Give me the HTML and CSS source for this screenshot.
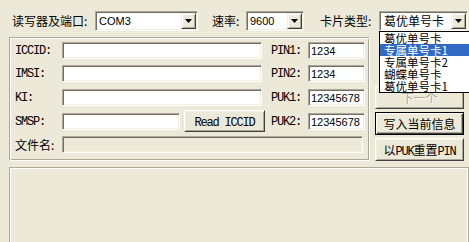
FILE: index.html
```html
<!DOCTYPE html>
<html>
<head>
    <meta charset="utf-8">
    <link rel="stylesheet" href="styles.css">
</head>
<body>
    <div class="top">
        <span class="top-lbl w-port">读写器及端口:</span>
        <div class="combo w-com">
            <span class="combo-text">COM3</span>
            <span class="arrow"></span>
        </div>
        <span class="top-lbl w-rate">速率:</span>
        <div class="combo w-baud">
            <span class="combo-text">9600</span>
            <span class="arrow"></span>
        </div>
        <span class="top-lbl w-type">卡片类型:</span>
        <div class="combo-wrap">
            <div class="combo w-card">
                <span class="combo-text cjk">葛优单号卡</span>
                <span class="arrow"></span>
            </div>
            <ul class="list">
                <li>葛优单号卡</li>
                <li class="sel">专属单号卡1</li>
                <li>专属单号卡2</li>
                <li>蝴蝶单号卡</li>
                <li>葛优单号卡1</li>
            </ul>
        </div>
    </div>

    <div class="main">
        <div class="group">
            <div class="row">
                <span class="lbl m">ICCID:</span>
                <input class="field w-iccid" type="text" value="">
                <span class="lbl2 m">PIN1:</span>
                <input class="field w-pin" type="text" value="1234">
            </div>
            <div class="row">
                <span class="lbl m">IMSI:</span>
                <input class="field w-iccid" type="text" value="">
                <span class="lbl2 m">PIN2:</span>
                <input class="field w-pin" type="text" value="1234">
            </div>
            <div class="row">
                <span class="lbl m">KI:</span>
                <input class="field w-iccid" type="text" value="">
                <span class="lbl2 m">PUK1:</span>
                <input class="field w-pin" type="text" value="12345678">
            </div>
            <div class="row">
                <span class="lbl m">SMSP:</span>
                <input class="field w-smsp" type="text" value="">
                <button class="btn btn-read"><span class="m">Read ICCID</span></button>
                <span class="lbl2 m">PUK2:</span>
                <input class="field w-pin" type="text" value="12345678">
            </div>
            <div class="row">
                <span class="lbl">文件名:</span>
                <input class="field w-file" type="text" value="" disabled>
            </div>
        </div>

        <div class="side">
            <button class="btn side-btn off" disabled>下一个</button>
            <button class="btn side-btn default">写入当前信息</button>
            <button class="btn side-btn">以<span class="m">PUK</span>重置<span class="m">PIN</span></button>
        </div>
    </div>

    <div class="log"></div>
</body>
</html>
```

FILE: styles.css
```css
body {
    margin: 0;
    width: 469px;
    height: 242px;
    overflow: hidden;
    background-color: #ece9d8;
    color: #000;
    font-family: "Noto Sans CJK SC", sans-serif;
    font-size: 12px;
}

.m {
    font-family: "Liberation Mono", monospace;
    font-size: 12px;
    letter-spacing: -1.2px;
}

/* top bar */
.top {
    display: flex;
    align-items: center;
    height: 20px;
    margin-top: 11px;
    padding-left: 12px;
}

.top-lbl {
    line-height: 20px;
}

.w-port { width: 83px; }
.w-rate { width: 30px; margin-left: 14px; }
.w-type { width: 54px; margin-left: 16px; }

.w-com { width: 103px; }
.w-baud { width: 58px; margin-left: 4px; }
.w-card { width: 89px; }

.combo-wrap {
    position: relative;
    margin-left: 5px;
}

.combo {
    display: flex;
    box-sizing: border-box;
    height: 20px;
    padding: 1px;
    background-color: #fff;
    border: 1px solid;
    border-color: #aca899 #fff #fff #aca899;
    box-shadow: inset 1px 1px #716f64, inset -1px -1px #f1efe2;
}

.combo-text {
    flex: 1;
    padding-left: 2px;
    font-family: "Liberation Sans", sans-serif;
    font-size: 11px;
    line-height: 16px;
}

.combo-text.cjk {
    font-family: "Noto Sans CJK SC", sans-serif;
    font-size: 12px;
    padding-left: 3px;
}

.arrow {
    display: flex;
    align-items: center;
    justify-content: center;
    box-sizing: border-box;
    width: 15px;
    height: 16px;
    background-color: #ece9d8;
    border: 1px solid;
    border-color: #f1efe2 #404040 #404040 #f1efe2;
    box-shadow: inset 1px 1px #fff, inset -1px -1px #aca899;
}

.arrow::after {
    content: "";
    width: 7px;
    height: 4px;
    background-color: #000;
    clip-path: polygon(0 0, 100% 0, 50% 100%);
}

/* open drop list */
.list {
    position: absolute;
    top: 20px;
    left: 0;
    z-index: 2;
    width: 92px;
    margin: 0;
    padding: 0;
    list-style: none;
    box-sizing: border-box;
    background-color: #fff;
    border: 1px solid #000;
}

.list li {
    height: 12px;
    padding-left: 4px;
    font-size: 11.5px;
    line-height: 12px;
    white-space: nowrap;
}

.list li.sel {
    background-color: #316ac5;
    color: #fff;
}

/* main area */
.main {
    display: flex;
    align-items: flex-start;
    height: 124px;
    margin-top: 6px;
}

.group {
    display: grid;
    grid-template-rows: 23px 24px 24px 23px 17px;
    box-sizing: border-box;
    width: 361px;
    height: 124px;
    margin-left: 9px;
    padding: 4px 0 0 5px;
    border: 1px solid;
    border-color: #aca899 #fff #fff #aca899;
    box-shadow: inset 1px 1px #fff, inset -1px -1px #aca899;
}

.row {
    display: flex;
    align-items: center;
    height: 17px;
}

.lbl {
    width: 47px;
    flex-shrink: 0;
}

.lbl2 {
    width: 37px;
    flex-shrink: 0;
    margin-left: 9px;
}

.field {
    box-sizing: border-box;
    height: 17px;
    margin: 0;
    padding: 0 2px;
    background-color: #fff;
    border: 1px solid;
    border-color: #aca899 #fff #fff #aca899;
    box-shadow: inset 1px 1px #716f64, inset -1px -1px #f1efe2;
    font-family: "Liberation Sans", sans-serif;
    font-size: 11px;
    color: #000;
    outline: none;
}

.field:disabled {
    background-color: #ece9d8;
}

.w-iccid { width: 200px; }
.w-pin { width: 57px; }
.w-smsp { width: 118px; }
.w-file { width: 301px; }

.btn {
    box-sizing: border-box;
    margin: 0;
    padding: 0;
    background-color: #ece9d8;
    border: 1px solid;
    border-color: #fff #404040 #404040 #fff;
    box-shadow: inset 1px 1px #f1efe2, inset -1px -1px #aca899;
    font-family: "Noto Sans CJK SC", sans-serif;
    font-size: 12px;
    color: #000;
}

.btn-read {
    width: 81px;
    height: 22px;
    margin-left: 4px;
    margin-top: -2px;
    margin-right: -3px;
}

.side {
    display: flex;
    flex-direction: column;
    gap: 3px;
    width: 89px;
    margin-left: 5px;
    padding-top: 49px;
}

.side-btn {
    width: 89px;
    height: 23px;
}

.side-btn.default {
    border-color: #000;
    box-shadow: inset 1px 1px #fff, inset -1px -1px #404040, inset -2px -2px #aca899;
}

.side-btn.off {
    color: #aca899;
    text-shadow: 1px 1px #fff;
}

.log {
    box-sizing: border-box;
    width: 460px;
    height: 80px;
    margin: 6px 0 0 9px;
    border: 1px solid #aca899;
    box-shadow: inset 1px 1px #fff, inset -1px -1px #fff;
}
```
